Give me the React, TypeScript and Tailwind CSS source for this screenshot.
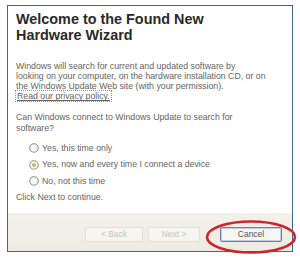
import React from "react";

function Radio({ selected, label }: { selected?: boolean; label: string }) {
  return (
    <div className="flex items-center h-[16.5px]">
      <svg width="10" height="10" viewBox="0 0 10 10" className="ml-[13px] mr-[3px]">
        <circle cx="5" cy="5" r="4.2" fill="#fafaf6" stroke={selected ? "#9c9a6a" : "#7f8f9e"} strokeWidth="1.1" />
        {selected && <circle cx="5" cy="5" r="2" fill="#b9b98a" />}
      </svg>
      <span>{label}</span>
    </div>
  );
}

export default function App() {
  return (
    <div className="w-[300px] h-[258px] bg-white relative overflow-hidden" style={{ fontFamily: '"Liberation Sans", Arial, sans-serif' }}>
      <div className="absolute left-[7px] top-[5px] w-[286px] h-[247px] border border-[#3f6596] border-r-[1.5px] flex flex-col">
        <div className="flex-1 bg-white pl-[8px] pr-[4px] pt-[5px] text-[#646464] text-[8.75px] leading-[9.8px]">
          <div className="text-[14.4px] leading-[16px] font-bold text-[#2a2a2a]">
            Welcome to the Found New
            <br />
            Hardware Wizard
          </div>
          <div className="mt-[19px]">
            Windows will search for current and updated software by
            <br />
            looking on your computer, on the hardware installation CD, or on
            <br />
            the Windows Update Web site (with your permission).
          </div>
          <div className="mt-[1px]">
            <span className="underline outline outline-1 outline-dotted outline-[#999] px-[1px]">Read our privacy policy.</span>
          </div>
          <div className="mt-[10px] leading-[11px]">
            Can Windows connect to Windows Update to search for
            <br />
            software?
          </div>
          <div className="mt-[6px]">
            <Radio label="Yes, this time only" />
            <Radio selected label="Yes, now and every time I connect a device" />
            <Radio label="No, not this time" />
          </div>
          <div className="mt-[3px]">Click Next to continue.</div>
        </div>
        <div className="h-[38px] bg-gradient-to-b from-[#f3f1ea] to-[#eeebe2] flex items-start pt-[14px] pl-[77px]">
          <div className="w-[58px] h-[15px] border border-[#e2dfd6] bg-[#f6f5f0] text-[#c8c6bf] text-[8.5px] flex items-center justify-center">
            &lt; Back
          </div>
          <div className="ml-[5px] w-[52px] h-[15px] border border-[#e2dfd6] bg-[#f6f5f0] text-[#c8c6bf] text-[8.5px] flex items-center justify-center">
            Next &gt;
          </div>
          <div className="ml-[20px] w-[62px] h-[15px] border border-[#6b7fa8] rounded-[2px] bg-[#f7f6f2] text-[#555] text-[8.5px] flex items-center justify-center shadow-[inset_0_0_0_1px_#c3cde3]">
            Cancel
          </div>
        </div>
      </div>
      <svg className="absolute left-0 top-0" width="300" height="258" viewBox="0 0 300 258">
        <ellipse cx="251" cy="237" rx="44" ry="15.5" fill="none" stroke="#d0232b" strokeWidth="2.6" />
      </svg>
    </div>
  );
}
